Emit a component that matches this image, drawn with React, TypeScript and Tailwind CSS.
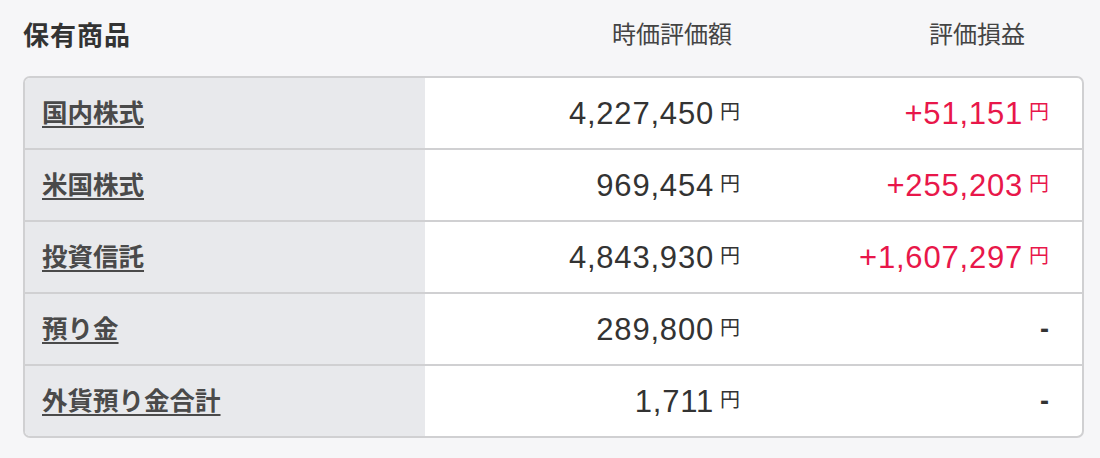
import React from "react";

const rows = [
  { name: "国内株式", value: "4,227,450", pl: "+51,151" },
  { name: "米国株式", value: "969,454", pl: "+255,203" },
  { name: "投資信託", value: "4,843,930", pl: "+1,607,297" },
  { name: "預り金", value: "289,800", pl: "" },
  { name: "外貨預り金合計", value: "1,711", pl: "" },
];

const font = { fontFamily: '"Liberation Sans", "Noto Sans CJK JP", sans-serif' };

function Yen({ amount, red }: { amount: string; red?: boolean }) {
  return (
    <div className={`flex items-center gap-[6px] ${red ? "text-[#e8174a]" : "text-[#333333]"}`}>
      <span className="text-[31px] leading-none tracking-[0.8px]">{amount}</span>
      <span className="text-[20px] leading-none mt-[-3px]">円</span>
    </div>
  );
}

export default function App() {
  return (
    <div className="w-[1100px] h-[458px] bg-[#f6f6f8] pl-[23px] pt-[17px]" style={font}>
      <div className="w-[1061px] grid grid-cols-[402px_348px_1fr] h-[32px] items-center">
        <div className="text-[26px] font-bold text-[#333333] tracking-[1px]">保有商品</div>
        <div className="text-[24px] text-[#444444] text-right pr-[41px] mt-[-4px]">時価評価額</div>
        <div className="text-[24px] text-[#444444] text-right pr-[59px] mt-[-4px]">評価損益</div>
      </div>
      <div className="mt-[27px] w-[1061px] border-2 border-[#d0d0d2] rounded-[7px] overflow-hidden bg-white">
        {rows.map((r, i) => (
          <div
            key={r.name}
            className={`grid grid-cols-[400px_348px_1fr] ${i > 0 ? "h-[72px] border-t-2 border-[#d0d0d2]" : "h-[70px]"}`}
          >
            <div className="bg-[#e8e9ec] flex items-center pl-[17px]">
              <a
                href="#"
                className="text-[25.5px] font-bold text-[#4a4a4a] underline decoration-2 underline-offset-[4px]"
              >
                {r.name}
              </a>
            </div>
            <div className="flex items-center justify-end pr-[33px]">
              <Yen amount={r.value} />
            </div>
            <div className="flex items-center justify-end pr-[33px]">
              {r.pl ? (
                <Yen amount={r.pl} red />
              ) : (
                <span className="text-[27px] leading-none font-bold text-[#333333]">-</span>
              )}
            </div>
          </div>
        ))}
      </div>
    </div>
  );
}
